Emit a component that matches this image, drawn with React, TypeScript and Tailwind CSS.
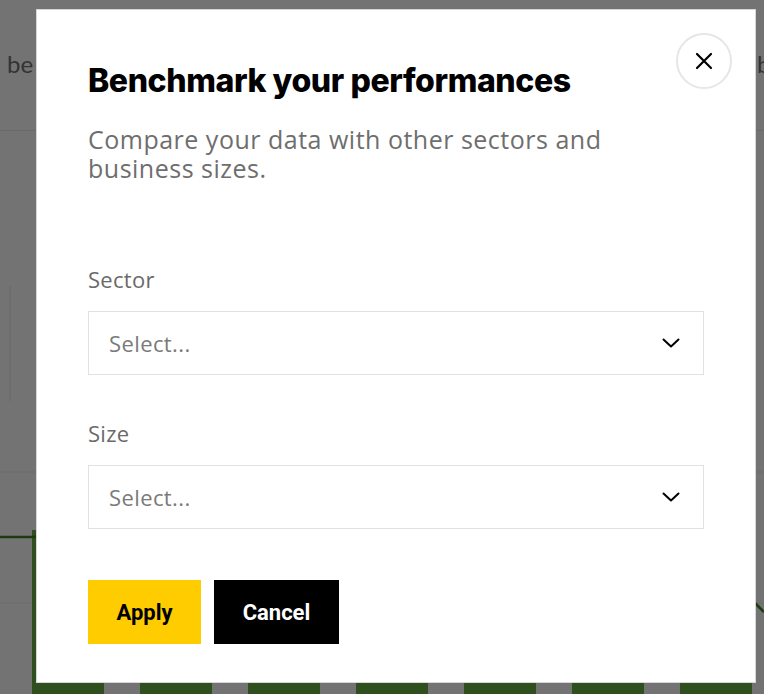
import React from "react";

function Chevron() {
  return (
    <svg width="20" height="20" viewBox="0 0 20 20" fill="none" className="shrink-0">
      <path d="M2.5 6.5 L10 13.5 L17.5 6.5" stroke="#000" strokeWidth="2" strokeLinecap="round" strokeLinejoin="round" />
    </svg>
  );
}

function SelectBox() {
  return (
    <div className="flex h-[64px] w-full items-center justify-between border border-[#e2e2e2] bg-white pl-[20px] pr-[22px]">
      <span className="text-[22px] leading-[28px] tracking-[0.4px] text-[#7a7a7a]" style={{ fontFamily: '"Open Sans", "Noto Sans", sans-serif' }}>
        Select...
      </span>
      <Chevron />
    </div>
  );
}

export default function App() {
  const bars = [32, 140, 248, 356, 464, 572, 680];
  return (
    <div className="relative h-[694px] w-full overflow-hidden bg-[#737373]" style={{ fontFamily: '"Open Sans", "Noto Sans", sans-serif' }}>
      {/* Background page (under overlay) */}
      <div className="flex h-[131px] items-center justify-between border-b border-[#6a6a6a] pl-[7px]">
        <span className="text-[24px] text-[#333] -mt-[2px]" style={{ fontFamily: 'Lato, sans-serif' }}>be</span>
        <span className="w-[7px] overflow-hidden text-[24px] text-[#333] -mt-[2px]" style={{ fontFamily: 'Lato, sans-serif' }}>b</span>
      </div>
      <svg className="block" width="764" height="563" viewBox="0 131 764 563">
        <line x1="10" y1="286" x2="10" y2="401" stroke="#696969" strokeWidth="1" />
        <line x1="0" y1="472" x2="764" y2="472" stroke="#6c6c6c" strokeWidth="1" />
        <line x1="0" y1="603" x2="764" y2="603" stroke="#6c6c6c" strokeWidth="1" />
        {bars.map((x) => (
          <rect key={x} x={x} y={530} width={72} height={170} fill="#2f4f1f" />
        ))}
        <polyline points="0,537 34,537 60,531" fill="none" stroke="#1d3a10" strokeWidth="2.5" />
        <polyline points="740,590 756,604 764,612" fill="none" stroke="#1d3a10" strokeWidth="2.5" />
      </svg>

      {/* Modal overlay content */}
      <div className="absolute left-[36px] top-[9px] h-[674px] w-[720px] border border-[#d6d6d6] bg-white px-[51px] pt-[51px]">
        <button className="absolute right-[23px] top-[23px] flex h-[56px] w-[56px] items-center justify-center rounded-full border-2 border-[#e6e6e6] bg-white">
          <svg width="20" height="20" viewBox="0 0 20 20" fill="none">
            <path d="M3 3 L17 17 M17 3 L3 17" stroke="#000" strokeWidth="2.2" strokeLinecap="round" />
          </svg>
        </button>

        <h1 className="text-[32px] font-extrabold leading-[40px] tracking-[-0.4px] text-black" style={{ fontFamily: 'Inter, sans-serif' }}>
          Benchmark your performances
        </h1>
        <p className="mt-[24px] w-[580px] text-[25px] leading-[29px] tracking-[0.5px] text-[#6e6e6e]" style={{ fontFamily: '"Open Sans", sans-serif' }}>
          Compare your data with other sectors and business sizes.
        </p>

        <div className="mt-[82px] flex flex-col">
          <label className="text-[22px] leading-[28px] tracking-[0.3px] text-[#6a6a6a]">Sector</label>
          <div className="mt-[18px]">
            <SelectBox />
          </div>
          <label className="mt-[44px] text-[22px] leading-[28px] tracking-[0.3px] text-[#6a6a6a]">Size</label>
          <div className="mt-[18px]">
            <SelectBox />
          </div>
        </div>

        <div className="mt-[51px] flex gap-[13px]">
          <button className="flex h-[64px] w-[113px] items-center justify-center bg-[#ffcc00] text-[22px] font-bold text-black" style={{ fontFamily: 'Roboto, sans-serif' }}>
            Apply
          </button>
          <button className="flex h-[64px] w-[125px] items-center justify-center bg-black text-[22px] font-bold text-white" style={{ fontFamily: 'Roboto, sans-serif' }}>
            Cancel
          </button>
        </div>
      </div>
    </div>
  );
}
